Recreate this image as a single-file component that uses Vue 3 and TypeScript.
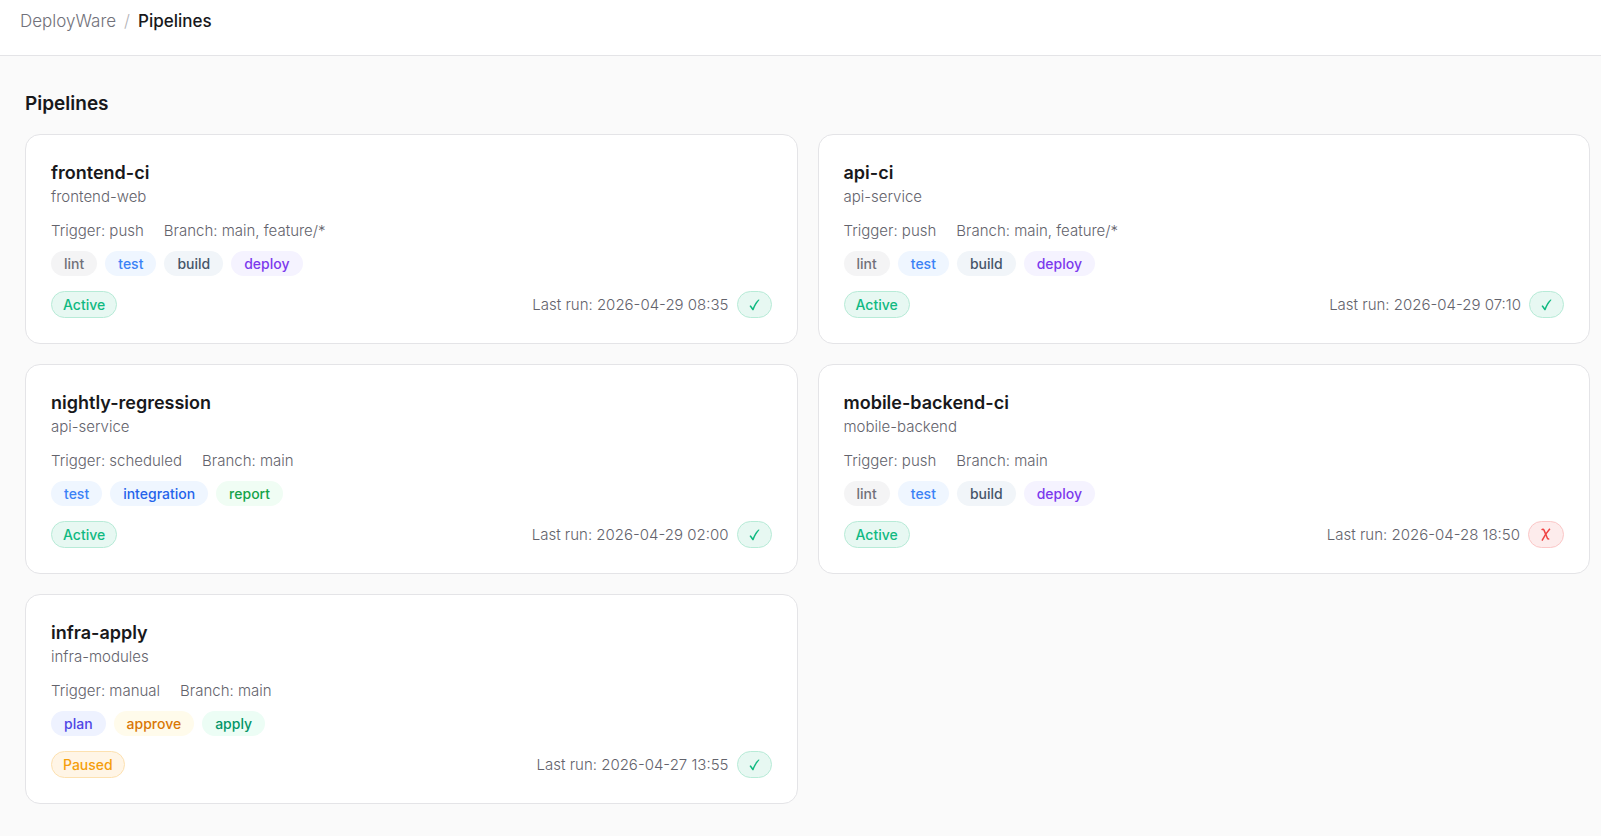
<script setup lang="ts">
interface Pipeline {
  name: string
  repo: string
  trigger: string
  branch: string
  stages: string[]
  status: 'Active' | 'Paused'
  lastRun: string
  passed: boolean
}

const pipelines: Pipeline[] = [
  { name: 'frontend-ci', repo: 'frontend-web', trigger: 'push', branch: 'main, feature/*', stages: ['lint', 'test', 'build', 'deploy'], status: 'Active', lastRun: '2026-04-29 08:35', passed: true },
  { name: 'api-ci', repo: 'api-service', trigger: 'push', branch: 'main, feature/*', stages: ['lint', 'test', 'build', 'deploy'], status: 'Active', lastRun: '2026-04-29 07:10', passed: true },
  { name: 'nightly-regression', repo: 'api-service', trigger: 'scheduled', branch: 'main', stages: ['test', 'integration', 'report'], status: 'Active', lastRun: '2026-04-29 02:00', passed: true },
  { name: 'mobile-backend-ci', repo: 'mobile-backend', trigger: 'push', branch: 'main', stages: ['lint', 'test', 'build', 'deploy'], status: 'Active', lastRun: '2026-04-28 18:50', passed: false },
  { name: 'infra-apply', repo: 'infra-modules', trigger: 'manual', branch: 'main', stages: ['plan', 'approve', 'apply'], status: 'Paused', lastRun: '2026-04-27 13:55', passed: true },
]
</script>

<template>
  <div class="page">
    <header class="topbar">
      <nav class="crumbs" aria-label="Breadcrumb">
        <a href="#" class="crumb">DeployWare</a>
        <span class="slash">/</span>
        <span class="current" aria-current="page">Pipelines</span>
      </nav>
    </header>
    <main class="content">
      <h1 class="heading">Pipelines</h1>
      <div class="grid">
        <article v-for="p in pipelines" :key="p.name" class="card">
          <h2 class="name">{{ p.name }}</h2>
          <p class="repo">{{ p.repo }}</p>
          <div class="meta">
            <span>Trigger: {{ p.trigger }}</span>
            <span>Branch: {{ p.branch }}</span>
          </div>
          <ul class="stages">
            <li v-for="s in p.stages" :key="s" class="stage" :class="s">{{ s }}</li>
          </ul>
          <div class="foot">
            <span class="badge" :class="p.status === 'Active' ? 'good' : 'warn'">{{ p.status }}</span>
            <div class="run">
              <span>Last run: {{ p.lastRun }}</span>
              <span class="badge result" :class="p.passed ? 'good' : 'bad'">
                <svg v-if="p.passed" width="11" height="13" viewBox="0 0 11 13" role="img" aria-label="Passed">
                  <path d="M0.5 8.1L1.8 7.2L3.8 9.9C5.5 6 7.3 3.2 10 1.3L10.4 1.9C8 4.7 6.2 7.8 4.5 12.2L3.4 12.3Z" fill="currentColor" />
                </svg>
                <svg v-else width="12" height="13" viewBox="0 0 12 13" role="img" aria-label="Failed">
                  <path d="M1.6 1.9C2.8 0.9 3.6 1.2 4.1 2.4L7.4 10.2C7.8 11.1 8.4 11.3 9.2 10.7" fill="none" stroke="currentColor" stroke-width="1.5" />
                  <path d="M9.9 0.8L5.6 6.3L2 12.6" fill="none" stroke="currentColor" stroke-width="1.5" />
                </svg>
              </span>
            </div>
          </div>
        </article>
      </div>
    </main>
  </div>
</template>

<style>
body {
  margin: 0;
  background: #fafafa;
}
</style>

<style scoped>
.page {
  font-family: Inter, "Open Sans", sans-serif;
  font-size: 15px;
  font-weight: 300;
  line-height: 24px;
  color: #63636c;
}
.topbar {
  box-sizing: border-box;
  height: 56px;
  padding: 9px 20px;
  background: #fff;
  border-bottom: 1px solid #e4e4e7;
}
.crumbs {
  display: flex;
  gap: 8px;
  font-size: 17px;
}
.crumb {
  color: #71717a;
  text-decoration: none;
}
.slash {
  color: #b4b4b8;
}
.current {
  color: #18181b;
  font-weight: 500;
}
.content {
  padding: 35px 11px 32px 25px;
}
.heading {
  margin: 0 0 18px;
  font-size: 19px;
  font-weight: 600;
  line-height: 25px;
  color: #18181b;
}
.grid {
  display: grid;
  grid-template-columns: repeat(2, minmax(0, 1fr));
  gap: 20px;
}
.card {
  padding: 25px;
  background: #fff;
  border: 1px solid #e4e4e7;
  border-radius: 15px;
}
.name {
  margin: 0;
  font-size: 18px;
  font-weight: 600;
  line-height: 25px;
  color: #18181b;
}
.repo {
  margin: 0 0 10px;
}
.meta {
  display: flex;
  gap: 20px;
  margin-bottom: 8px;
}
.stages {
  display: flex;
  gap: 8px;
  margin: 0 0 15px;
  padding: 0;
  list-style: none;
}
.stage {
  padding: 0 13px;
  border-radius: 13px;
  font-size: 14px;
  font-weight: 500;
  line-height: 25px;
}
.lint { background: #f4f4f5; color: #71717a; }
.test { background: #eff6ff; color: #3b82f6; }
.build { background: #f1f5f9; color: #475569; }
.deploy { background: #f5f3ff; color: #7c3aed; }
.integration { background: #eff6ff; color: #2563eb; }
.report { background: #f0fdf4; color: #16a34a; }
.plan { background: #eef2ff; color: #4f46e5; }
.approve { background: #fffbeb; color: #d97706; }
.apply { background: #ecfdf5; color: #059669; }
.foot,
.run {
  display: flex;
  align-items: center;
}
.foot {
  justify-content: space-between;
}
.run {
  gap: 8px;
}
.badge {
  padding: 0 11px;
  border: 1px solid;
  border-radius: 14px;
  font-size: 14px;
  font-weight: 500;
  line-height: 25px;
}
.result {
  display: flex;
  align-items: center;
  height: 25px;
}
.good { background: #e7f8f2; border-color: #b7ebd7; color: #10b981; }
.warn { background: #fff5e6; border-color: #fde1b0; color: #f59e0b; }
.bad { background: #fdecec; border-color: #fbc7c7; color: #ef4444; }
</style>
